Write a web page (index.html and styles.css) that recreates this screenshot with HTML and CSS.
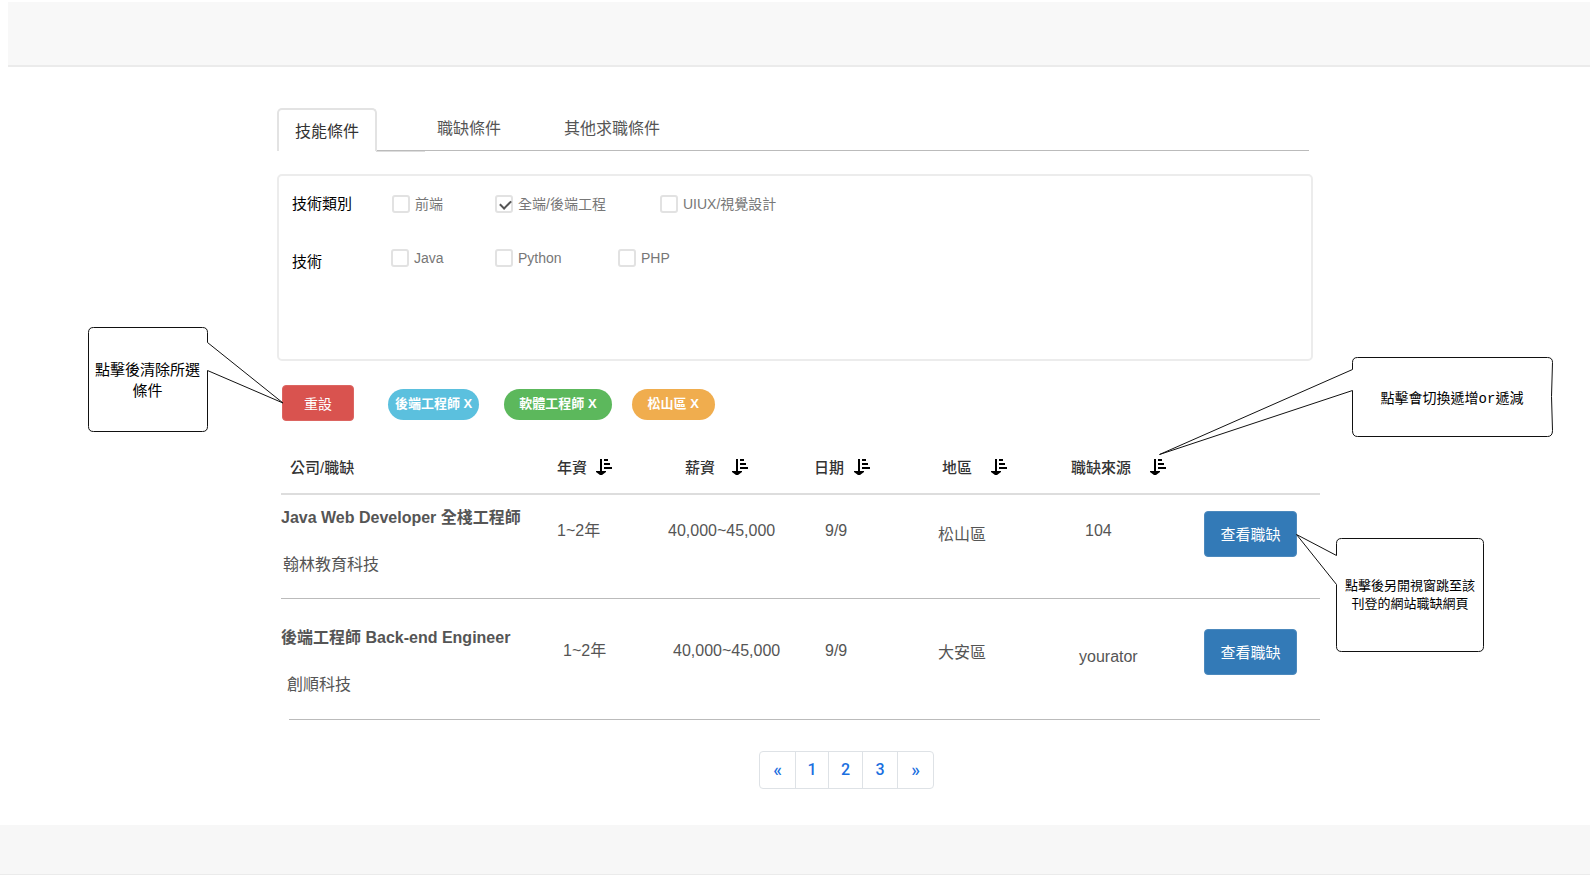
FILE: index.html
```html
<!DOCTYPE html>
<html lang="zh-Hant">
<head>
<meta charset="utf-8">
<meta name="viewport" content="width=device-width, initial-scale=1">
<title>職缺搜尋</title>
<link rel="stylesheet" href="styles.css">
</head>
<body>
<svg class="defs" aria-hidden="true">
  <symbol id="sort" viewBox="0 0 16 16">
    <path d="M4 0h2v12h4v1L6 16H4L0 13v-1h4zM8 0h4v2H8zM8 4h6v2H8zM8 8h8v2H8z"/>
  </symbol>
</svg>
<header class="site-header"></header>
<main class="content">
  <nav class="tabs" role="tablist">
    <button class="tab tab--active" role="tab" aria-selected="true">技能條件</button>
    <button class="tab tab--job" role="tab" aria-selected="false">職缺條件</button>
    <button class="tab tab--other" role="tab" aria-selected="false">其他求職條件</button>
  </nav>

  <section class="panel">
    <div class="group group--type" role="group" aria-labelledby="type-title">
      <span class="group__title" id="type-title">技術類別</span>
      <label class="check"><input type="checkbox">前端</label>
      <label class="check"><input type="checkbox" checked>全端/後端工程</label>
      <label class="check"><input type="checkbox">UIUX/視覺設計</label>
    </div>
    <div class="group group--skill" role="group" aria-labelledby="skill-title">
      <span class="group__title" id="skill-title">技術</span>
      <label class="check"><input type="checkbox">Java</label>
      <label class="check"><input type="checkbox">Python</label>
      <label class="check"><input type="checkbox">PHP</label>
    </div>
  </section>

  <div class="filters">
    <button class="reset">重設</button>
    <button class="chip chip--blue">後端工程師 X</button>
    <button class="chip chip--green">軟體工程師 X</button>
    <button class="chip chip--orange">松山區 X</button>
  </div>

  <table class="jobs">
    <colgroup>
      <col class="col-job"><col class="col-year"><col class="col-pay"><col class="col-date"><col class="col-area"><col class="col-source"><col class="col-action">
    </colgroup>
    <thead>
      <tr>
        <th class="h-job">公司/職缺</th>
        <th class="h-year">年資<button class="sort" aria-label="排序年資"><svg><use href="#sort"/></svg></button></th>
        <th class="h-pay">薪資<button class="sort sort--wide" aria-label="排序薪資"><svg><use href="#sort"/></svg></button></th>
        <th class="h-date">日期<button class="sort sort--mid" aria-label="排序日期"><svg><use href="#sort"/></svg></button></th>
        <th class="h-area">地區<button class="sort sort--far" aria-label="排序地區"><svg><use href="#sort"/></svg></button></th>
        <th class="h-source">職缺來源<button class="sort sort--far" aria-label="排序職缺來源"><svg><use href="#sort"/></svg></button></th>
        <td></td>
      </tr>
    </thead>
    <tbody>
      <tr class="job-a">
        <td><h2 class="job__title">Java Web Developer 全棧工程師</h2><p class="job__company">翰林教育科技</p></td>
        <td class="year">1~2年</td>
        <td class="pay">40,000~45,000</td>
        <td class="date">9/9</td>
        <td class="area">松山區</td>
        <td class="source">104</td>
        <td class="action"><a class="view" href="#">查看職缺</a></td>
      </tr>
      <tr class="job-b">
        <td><h2 class="job__title">後端工程師 Back-end Engineer</h2><p class="job__company">創順科技</p></td>
        <td class="year">1~2年</td>
        <td class="pay">40,000~45,000</td>
        <td class="date">9/9</td>
        <td class="area">大安區</td>
        <td class="source">yourator</td>
        <td class="action"><a class="view" href="#">查看職缺</a></td>
      </tr>
    </tbody>
  </table>

  <nav class="pages" aria-label="分頁">
    <a class="pages__step" href="#">«</a><a href="#">1</a><a href="#">2</a><a href="#">3</a><a class="pages__step" href="#">»</a>
  </nav>

  <aside class="note note--reset">
    <svg viewBox="0 0 197 106"><path d="M5.500.5h109q5 0 5 5v10L195 76l-75.500-32.500v56q0 5-5 5h-109q-5 0-5-5v-94q0-5 5-5z"/></svg>
    <p>點擊後清除所選條件</p>
  </aside>
  <aside class="note note--sort">
    <svg viewBox="0 0 395 99"><path d="M198.500.5h190q5 0 5 5l-1 34 1 34q0 6-5 6h-190q-5 0-5-6v-40L.5 97.500l193-85v-7q0-5 5-5z" /></svg>
    <p>點擊會切換遞增<span class="mono">or</span>遞減</p>
  </aside>
  <aside class="note note--view">
    <svg viewBox="0 0 189 119"><path d="M45.500 4.500h137q5 0 5 5v103q0 5-5 5h-137q-5 0-5-5v-62L.5.5l40 21v-12q0-5 5-5z"/></svg>
    <p>點擊後另開視窗跳至該刊登的網站職缺網頁</p>
  </aside>
</main>
<footer class="site-footer"></footer>
</body>
</html>
```
FILE: styles.css
```css
* { box-sizing: border-box; }
body {
  margin: 0;
  min-height: 100vh;
  display: flex;
  flex-direction: column;
  background: #fff;
  color: #555;
  font: 16px/24px "Liberation Sans", "Noto Sans CJK TC", sans-serif;
  overflow-x: hidden;
}
button, input { font: inherit; margin: 0; }
button { cursor: pointer; }
.defs { position: absolute; width: 0; height: 0; }

.site-header {
  height: 65px;
  margin: 2px 0 0 8px;
  background: #f8f8f8;
  border-bottom: 2px solid #ebebeb;
}
.site-footer {
  height: 50px;
  background: #f7f7f7;
  border-bottom: 1px solid #ebebeb;
}
.content {
  position: relative;
  flex: 1;
  width: 100%;
  max-width: 1036px;
  margin: 0 auto;
  padding: 41px 0 36px;
}

.tabs {
  position: relative;
  display: flex;
  height: 43px;
  margin-right: 4px;
  border-bottom: 1px solid #bbb;
}
.tabs::after {
  content: "";
  position: absolute;
  left: 99px;
  bottom: -2px;
  width: 49px;
  height: 1px;
  background: #ddd;
}
.tab {
  height: 42px;
  padding: 0 16px;
  border: 0;
  background: none;
  color: #555;
}
.tab--active {
  height: 43px;
  padding-top: 2px;
  border: 2px solid #e3e3e3;
  border-bottom: 0;
  border-radius: 5px 5px 0 0;
  background: #fff;
  color: #333;
}
.tab--job { margin-left: 44px; }
.tab--other { margin-left: 31px; }

.panel {
  height: 187px;
  margin-top: 23px;
  padding: 16px 13px;
  border: 2px solid #ececec;
  border-radius: 5px;
}
.group {
  display: grid;
  grid-template-columns: 100px 103px 165px auto;
  justify-content: start;
  align-items: center;
  height: 24px;
}
.group--skill {
  grid-template-columns: 99px 104px 123px auto;
  height: 32px;
  margin-top: 26px;
}
.group--skill .group__title { align-self: end; }
.group__title { color: #000; font-size: 15px; }
.check {
  display: flex;
  align-items: center;
  gap: 5px;
  color: #777;
  font-size: 14px;
}
.check input {
  appearance: none;
  position: relative;
  width: 18px;
  height: 18px;
  border: 2px solid #e2e2e2;
  border-radius: 3px;
  background: #fff;
}
.check input:checked::after {
  content: "";
  position: absolute;
  left: 5px;
  top: 1px;
  width: 5px;
  height: 9px;
  border: solid #555;
  border-width: 0 2px 2px 0;
  transform: rotate(45deg);
}

.filters {
  display: flex;
  align-items: center;
  margin: 24px 0 0 5px;
}
.reset {
  width: 72px;
  height: 36px;
  padding: 2px 0 0;
  border: 1px solid #dc6561;
  border-radius: 4px;
  background: #d9534f;
  color: #fff;
  font-size: 14px;
}
.chip {
  height: 31px;
  margin-top: 2px;
  border: 0;
  border-radius: 16px;
  color: #fff;
  font-size: 13px;
  font-weight: bold;
  white-space: nowrap;
}
.chip--blue { margin-left: 34px; padding: 0 7px; background: #5bc0de; }
.chip--green { margin-left: 25px; padding: 0 15px; background: #5cb85c; }
.chip--orange { margin-left: 20px; padding: 0 16px; background: #f0ad4e; }

.jobs {
  width: calc(100% + 3px);
  margin: 23px 0 0 4px;
  border-collapse: separate;
  border-spacing: 0;
  table-layout: fixed;
}
.col-job { width: 269px; }
.col-year { width: 117px; }
.col-pay { width: 147px; }
.col-date { width: 124px; }
.col-area { width: 132px; }
.col-source { width: 134px; }
.jobs th, .jobs td {
  padding: 0;
  text-align: left;
  vertical-align: top;
  white-space: nowrap;
}
.jobs thead th, .jobs thead td {
  height: 51px;
  padding-top: 12px;
  border-bottom: 2px solid #ddd;
  color: #333;
  font-size: 15px;
  font-weight: 500;
}
.jobs .h-job { padding-left: 9px; }
.jobs .h-year { padding-left: 7px; }
.jobs .h-pay { padding-left: 18px; }
.jobs .h-area { padding-left: 4px; }
.jobs .h-source { padding-left: 1px; }
.sort {
  width: 16px;
  height: 16px;
  margin: 0 0 4px 9px;
  padding: 0;
  border: 0;
  background: none;
  vertical-align: middle;
}
.sort svg { display: block; width: 16px; height: 16px; }
.sort--mid { margin-left: 10px; }
.sort--wide { margin-left: 17px; }
.sort--far { margin-left: 19px; }

.jobs tbody td { border-bottom: 1px solid #bbb; }
.jobs .job-a td { height: 104px; padding-top: 24px; }
.jobs .job-b td { height: 121px; padding-top: 40px; }
.jobs .job-a td:first-child { padding-top: 11px; }
.jobs .job-b td:first-child {
  padding-top: 27px;
  border-bottom: 0;
  background: linear-gradient(#bbb, #bbb) 8px 100% / 100% 1px no-repeat;
}
.job__title { margin: 0; font-size: 16px; font-weight: bold; }
.job__company { margin: 23px 0 0 2px; }
.job-b .job__company { margin-left: 6px; }
.jobs .year { padding-left: 7px; }
.jobs .job-b .year { padding-left: 13px; }
.jobs .pay { padding-left: 1px; }
.jobs .job-b .pay { padding-left: 6px; }
.jobs .date { padding-left: 11px; }
.jobs .job-a .area { padding-top: 28px; }
.jobs .job-b .area { padding-top: 42px; }
.jobs .source { padding-left: 15px; }
.jobs .job-b .source { padding-top: 46px; padding-left: 9px; }
.jobs .job-a .action { padding-top: 16px; }
.jobs .job-b .action { padding-top: 30px; }
.view {
  display: block;
  width: 93px;
  height: 46px;
  padding-top: 1px;
  border: 1px solid #4c89bd;
  border-radius: 4px;
  background: #337ab7;
  color: #fff;
  font-size: 15px;
  line-height: 44px;
  text-align: center;
  text-decoration: none;
}

.pages {
  display: grid;
  grid-template-columns: 35px 33px 34px 35px 36px;
  width: 175px;
  height: 38px;
  margin: 31px 0 0 482px;
  border: 1px solid #dee2e6;
  border-radius: 4px;
}
.pages a {
  border-left: 1px solid #dee2e6;
  color: #1a6fe0;
  font: 500 16px/36px Roboto, sans-serif;
  text-align: center;
  text-decoration: none;
}
.pages a:first-child { border-left: 0; }
.pages .pages__step { font-size: 18px; }

.note {
  position: absolute;
  display: flex;
  align-items: center;
  color: #000;
  text-align: center;
  pointer-events: none;
}
.note svg {
  position: absolute;
  inset: 0;
  fill: none;
  stroke: #111;
}
.note p { position: relative; margin: 0; }
.note--reset { left: -189px; top: 260px; width: 197px; height: 106px; font-size: 15px; line-height: 21px; }
.note--reset p { width: 107px; margin-left: 6px; }
.note--sort { left: 882px; top: 290px; width: 395px; height: 99px; font-size: 14px; line-height: 20px; }
.note--sort p { width: 200px; margin: 0 0 16px 193px; }
.note--view { left: 1019px; top: 467px; width: 189px; height: 119px; font-size: 13px; line-height: 18px; }
.note--view p { width: 132px; margin: 2px 0 0 48px; }
.mono { font-family: "Liberation Mono", monospace; }
```
